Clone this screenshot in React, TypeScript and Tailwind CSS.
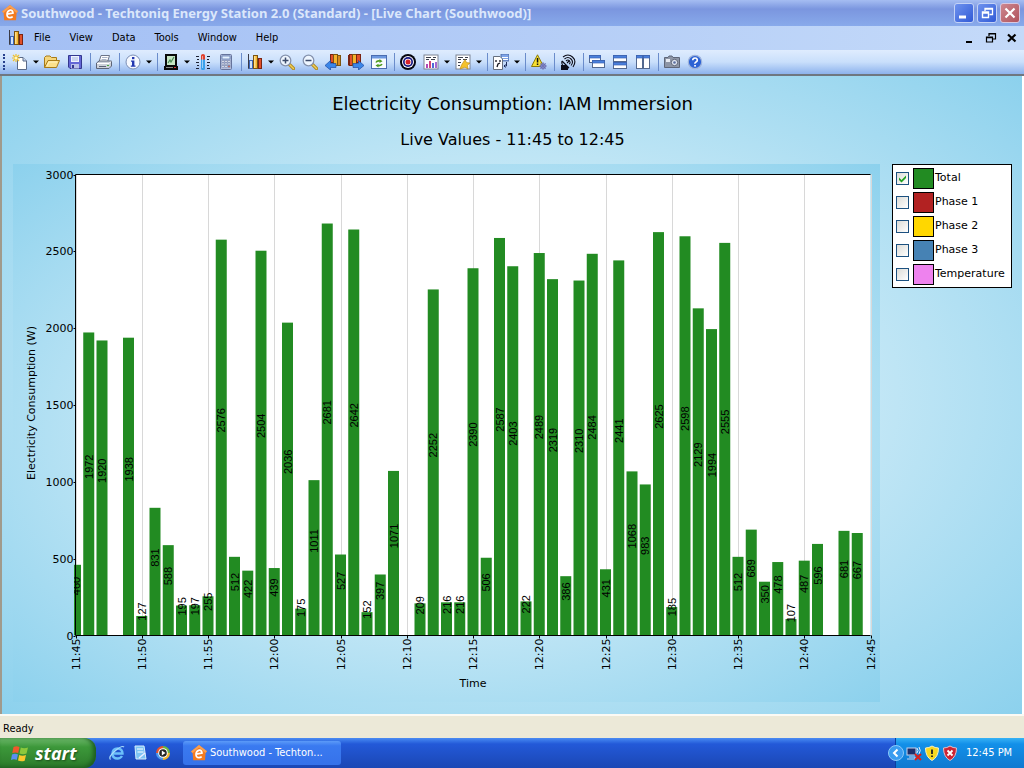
import React, { useState } from 'react';

type IconProps = { className?: string };

const Svg = ({ className = 'h-4 w-4', children }: IconProps & { children: React.ReactNode }) => (
  <svg viewBox="0 0 16 16" className={`shrink-0 ${className}`} aria-hidden="true">
    {children}
  </svg>
);

const HomeLogo = ({ className }: IconProps) => (
  <Svg className={className}>
    <path d="M8 0 16 6.2 14.6 8 14 15.2H2.2L1.6 8 0 6.4Z" fill="#f47b20" />
    <path d="M8 0 16 6.2 14.6 8 8 2.6 1.6 8 0 6.4Z" fill="#f9a052" />
    <path d="M5 9.2 11 8q-.2-3-2.7-2.8Q5.400 5.600 5 9q-.1 3.600 3 3.600 1.500 0 2.700-1" fill="none" stroke="#fff" strokeWidth="1.700" />
  </Svg>
);

const BarsIcon = ({ className }: IconProps) => (
  <Svg className={className}>
    <path d="M1.500 0V14.500H15" fill="none" stroke="#3b3b46" />
    <rect x="2.500" y="6.500" width="3" height="8" fill="#cfe2fb" stroke="#3d66b8" />
    <rect x="6.500" y="1.500" width="4" height="13" fill="#f6b32c" stroke="#7c5410" />
    <rect x="7" y="2" width="1.500" height="12" fill="#fde08a" />
    <rect x="11.500" y="4.500" width="3" height="10" fill="#e2502a" stroke="#7a2412" />
  </Svg>
);

const NewIcon = () => (
  <Svg>
    <path d="M5.500 3.500H11L14.500 7V15.500H5.500Z" fill="#fff" stroke="#5a6a88" />
    <path d="M11 3.500V7H14.500" fill="#c6d6f0" stroke="#5a6a88" />
    <path d="M4 0V8M0 4H8M1 1 7 7M7 1 1 7" stroke="#f0c030" strokeWidth="1.200" />
    <circle cx="4" cy="4" r="1.500" fill="#fff8c0" />
  </Svg>
);

const OpenIcon = () => (
  <Svg>
    <path d="M.5 13.500V3.500L2 2H6L7.500 3.500H12.500V6.500" fill="#f5d67c" stroke="#a87b18" />
    <path d="M.5 13.500 4 6.500H15.500L12.500 13.500Z" fill="#fbe08c" stroke="#a87b18" />
    <path d="M3 12 5 8H13" fill="none" stroke="#fff3c4" />
  </Svg>
);

const SaveIcon = () => (
  <Svg>
    <path d="M1.500 1.500H14.500V14.500H3L1.500 13Z" fill="#6467d6" stroke="#34388f" />
    <rect x="4" y="2" width="8" height="6" fill="#eef3ff" />
    <path d="M5 4H11M5 6H11" stroke="#a5b4dd" />
    <rect x="4" y="10" width="8" height="4.500" fill="#b9c0e8" />
    <rect x="5" y="11" width="2" height="3" fill="#34388f" />
  </Svg>
);

const PrintIcon = () => (
  <Svg>
    <path d="M5 1.500H13.500L11.500 8H3Z" fill="#fff" stroke="#6b7488" />
    <path d="M6 3.500H11.500M5.500 5.500H10.500" stroke="#a9b4c8" />
    <path d="M.500 9 3 7H15.500V12L13 14.500H.500Z" fill="#cdd1da" stroke="#5c6478" />
    <path d="M1 9.500H13L15 7.500" fill="none" stroke="#fff" />
    <path d="M3 12.500H10" stroke="#5c6478" />
    <rect x="11" y="11" width="2" height="1" fill="#4aa83c" />
  </Svg>
);

const InfoIcon = () => (
  <Svg>
    <circle cx="8" cy="8" r="7" fill="#f4f8ff" stroke="#7c8fb5" />
    <rect x="7" y="3" width="2.400" height="2.200" fill="#2438b0" />
    <path d="M6 6.500H9.400V11.500H10.500V12.700H5.800V11.500H7V7.700H6Z" fill="#2438b0" />
  </Svg>
);

const DeviceIcon = () => (
  <Svg>
    <path d="M2 0H14V12H15V16H1V12H2Z" fill="#0a0a0a" />
    <rect x="4" y="2" width="8" height="9" fill="#c6e6c4" />
    <path d="M5 9 7 6 8 8 11 3" fill="none" stroke="#4b8a56" strokeWidth="1.200" />
    <path d="M3 13.500H10" stroke="#8a8a8a" />
    <rect x="11" y="13" width="2" height="1" fill="#d33" />
  </Svg>
);

const ThermoIcon = () => (
  <Svg>
    <path d="M1 2.500H4M2 5.500H4M1 8.500H4M2 11.500H4M1 14.500H4M12 2.500H15M12 5.500H14M12 8.500H15M12 11.500H14M12 14.500H15" stroke="#1d2233" />
    <rect x="6" y="0" width="4" height="7" rx="2" fill="#e0402c" />
    <rect x="6" y="3" width="4" height="13" rx="1.500" fill="#3aa0ec" />
    <rect x="6" y="1.500" width="4" height="4" fill="#e0402c" />
    <path d="M7.500 2V14" stroke="#fff" strokeOpacity=".5" />
  </Svg>
);

const CalcIcon = () => (
  <Svg>
    <rect x="2.500" y=".500" width="11" height="15" rx="1" fill="#b4bfdc" stroke="#66749c" />
    <rect x="4" y="2" width="8" height="3" fill="#e5f2ff" stroke="#5570a8" strokeWidth=".7" />
    {[6.500, 9, 11.500].map((y) => (
      <g key={y} fill="#fff" stroke="#6a78a0" strokeWidth=".5">
        <rect x="4" y={y} width="2" height="1.700" />
        <rect x="7" y={y} width="2" height="1.700" />
        <rect x="10" y={y} width="2" height="1.700" fill={y > 11 ? '#e06a4a' : '#fff'} />
      </g>
    ))}
  </Svg>
);

const ZoomIcon = ({ plus = false }: { plus?: boolean }) => (
  <Svg>
    <path d="M10 10 14.500 14.500" stroke="#b08a1c" strokeWidth="3.200" strokeLinecap="round" />
    <path d="M10.500 10.500 14.500 14.500" stroke="#f0cf5c" strokeWidth="1.400" strokeLinecap="round" />
    <circle cx="6.500" cy="6.500" r="5.300" fill="#eef6ff" stroke="#8592ad" strokeWidth="1.300" />
    <path d={plus ? 'M3.500 6.500H9.500M6.500 3.500V9.500' : 'M3.500 6.500H9.500'} stroke="#3b4a6a" strokeWidth="1.500" />
  </Svg>
);

const ChartBackIcon = () => (
  <Svg>
    <rect x="5.500" y=".500" width="3" height="8" fill="#e2502a" stroke="#7a2412" />
    <rect x="8.500" y=".500" width="4" height="11" fill="#f6b32c" stroke="#7c5410" />
    <rect x="12.500" y="1.500" width="3" height="10" fill="#d88a20" stroke="#7c5410" />
    <path d="M0 11.500 5.500 6.500V9.500H11V13.500H5.500V16Z" fill="#3b86e8" stroke="#1c4ba4" strokeWidth=".7" />
  </Svg>
);

const ChartForwardIcon = () => (
  <Svg>
    <path d="M.500 1V11.500" stroke="#7a2412" />
    <rect x="1.500" y=".500" width="3" height="11" fill="#e2502a" stroke="#7a2412" />
    <rect x="4.500" y=".500" width="4" height="11" fill="#f6b32c" stroke="#7c5410" />
    <rect x="8.500" y=".500" width="4" height="8" fill="#e2502a" stroke="#7a2412" />
    <path d="M16 11.500 10.500 6.500V9.500H5V13.500H10.500V16Z" fill="#3b86e8" stroke="#1c4ba4" strokeWidth=".7" />
  </Svg>
);

const RefreshIcon = () => (
  <Svg>
    <rect x=".500" y="1.500" width="15" height="13" fill="#f7fbff" stroke="#4a6cb0" />
    <rect x="1" y="2" width="14" height="2.500" fill="#6c98e0" />
    <path d="M5 8.500Q6 6.500 9 7M11 10Q10 12 7 11.500" fill="none" stroke="#4f9a20" strokeWidth="1.600" />
    <path d="M8.500 5 11.500 7.300 8.500 9ZM7.500 9.700 4.500 11.500 7.500 13.500Z" fill="#4f9a20" />
  </Svg>
);

const TargetIcon = () => (
  <Svg>
    <circle cx="8" cy="8" r="8" fill="#05050f" />
    <circle cx="8" cy="8" r="6" fill="#fff" />
    <circle cx="8" cy="8" r="5" fill="#161680" />
    <circle cx="8" cy="8" r="3.300" fill="#fff" />
    <circle cx="8" cy="8" r="2.500" fill="#d8232a" />
  </Svg>
);

const ReportIcon = () => (
  <Svg>
    <rect x="1" y="1" width="14" height="14" fill="#fff" stroke="#7c8494" />
    <path d="M3 3.500H8M10 3.500H13M3 5.500H6M8 5.500H12" stroke="#3a3f4c" />
    <rect x="3" y="10" width="2" height="4" fill="#b04ab8" />
    <rect x="6" y="7" width="2" height="7" fill="#d0447c" />
    <rect x="9" y="9" width="2" height="5" fill="#4c6cd8" />
    <rect x="12" y="8" width="2" height="6" fill="#a86ad0" />
  </Svg>
);

const ReportStarIcon = () => (
  <Svg>
    <rect x="1" y="1" width="14" height="14" fill="#fff" stroke="#7c8494" />
    <path d="M3 3.500H8M10 3.500H13M3 5.500H6M8 5.500H12M3 8.500H6M3 11.500H5" stroke="#3a3f4c" />
    <path d="M10 5.500 11.500 8.500 15 9 12.500 11.300 13 15 10 13.200 5 15 6.500 11Z" fill="#f4c22c" stroke="#b98714" strokeWidth=".6" />
  </Svg>
);

const ExportIcon = () => (
  <Svg>
    <rect x="8" y="0" width="8" height="7" fill="#7fa4e8" stroke="#44619c" strokeWidth=".8" />
    <path d="M9 3.500H15M9 5.500H15" stroke="#fff" />
    <path d="M.500 2.500H7L9.500 5V15.500H.500Z" fill="#fff" stroke="#66707f" />
    <path d="M3 6V8M7 6V8M4 13 5 10 7 9" stroke="#15151f" strokeWidth="1.300" fill="none" />
    <path d="M13.500 8V12H11M12.500 10.500 11 12 12.500 13.500" stroke="#1d2d5c" fill="none" />
  </Svg>
);

const WarningIcon = () => (
  <Svg>
    <path d="M6.500.800 12.500 12.500H.500Z" fill="#f8e032" stroke="#8a7a08" />
    <rect x="5.800" y="4" width="1.500" height="4.500" fill="#111" />
    <rect x="5.800" y="9.500" width="1.500" height="1.500" fill="#111" />
    <circle cx="12" cy="12" r="2.200" fill="#c9cdf0" stroke="#6a6fb4" strokeWidth="1.300" />
    <path d="M12 8V16M8 12H16M9.200 9.200 14.800 14.800M14.800 9.200 9.200 14.800" stroke="#6a6fb4" strokeWidth=".8" />
  </Svg>
);

const DishIcon = () => (
  <Svg>
    <g fill="none" stroke="#0c0c18" strokeWidth="1.100">
      <path d="M3 3Q8-1 12.500 3T13 13" />
      <path d="M4.500 5Q8 2 11 5T11 11.500" />
      <path d="M6 7Q8 5 9.500 7T9 10" />
      <path d="M2 7 9 14M2 7Q1 11 5 13L9 14M7 9 9.500 6.500" />
    </g>
    <path d="M1 11H6L8 13V16H1Z" fill="#0c0c18" />
  </Svg>
);

const Pane = ({ x, y, w, h }: { x: number; y: number; w: number; h: number }) => (
  <g>
    <rect x={x + 0.5} y={y + 0.5} width={w - 1} height={h - 1} fill="#fff" stroke="#54698f" />
    <rect x={x + 0.5} y={y + 0.5} width={w - 1} height="2.500" fill="#4a80dc" stroke="#3a62b4" strokeWidth=".7" />
  </g>
);

const CascadeIcon = () => <Svg><Pane x={0} y={1} w={12} h={8} /><Pane x={3} y={6} w={13} h={8} /></Svg>;
const TileRowsIcon = () => <Svg><Pane x={1} y={1} w={14} h={7} /><Pane x={1} y={8} w={14} h={7} /></Svg>;
const TileColumnsIcon = () => <Svg><Pane x={1} y={1} w={7} h={14} /><Pane x={8} y={1} w={7} h={14} /></Svg>;

const CameraIcon = () => (
  <Svg>
    <path d="M.500 3.500H4L5 2H8L9 3.500H15.500V13.500H.500Z" fill="#8d95a6" stroke="#5e6678" />
    <rect x="2" y="5" width="4" height="3" fill="#e6eaf2" />
    <circle cx="10.500" cy="8.500" r="3.200" fill="#dfe5f0" stroke="#5e6678" />
    <circle cx="10.500" cy="8.500" r="1.300" fill="#5a6ea0" />
  </Svg>
);

const HelpIcon = () => (
  <Svg>
    <circle cx="8" cy="8" r="6.700" fill="#2c62d4" stroke="#9fb4dc" strokeWidth="1.200" />
    <path d="M5.700 6.300Q5.800 4 8 4T10.300 6.200Q10.300 7.300 9 8T8 9.800" fill="none" stroke="#fff" strokeWidth="1.600" />
    <rect x="7.200" y="11" width="1.700" height="1.600" fill="#fff" />
  </Svg>
);

type Tool = { label: string; icon: React.ReactNode; menu?: boolean };

const toolGroups: Tool[][] = [
  [
    { label: 'New', icon: <NewIcon />, menu: true },
    { label: 'Open', icon: <OpenIcon /> },
    { label: 'Save', icon: <SaveIcon /> },
  ],
  [{ label: 'Print', icon: <PrintIcon /> }],
  [{ label: 'Information', icon: <InfoIcon />, menu: true }],
  [
    { label: 'Device', icon: <DeviceIcon />, menu: true },
    { label: 'Temperature', icon: <ThermoIcon /> },
    { label: 'Calculator', icon: <CalcIcon /> },
  ],
  [
    { label: 'Chart', icon: <BarsIcon />, menu: true },
    { label: 'Zoom in', icon: <ZoomIcon plus /> },
    { label: 'Zoom out', icon: <ZoomIcon /> },
    { label: 'Previous period', icon: <ChartBackIcon /> },
    { label: 'Next period', icon: <ChartForwardIcon /> },
    { label: 'Refresh', icon: <RefreshIcon /> },
  ],
  [
    { label: 'Targets', icon: <TargetIcon /> },
    { label: 'Report', icon: <ReportIcon />, menu: true },
    { label: 'Favourite reports', icon: <ReportStarIcon />, menu: true },
  ],
  [{ label: 'Export', icon: <ExportIcon />, menu: true }],
  [{ label: 'Alerts', icon: <WarningIcon /> }],
  [{ label: 'Receiver', icon: <DishIcon /> }],
  [
    { label: 'Cascade', icon: <CascadeIcon /> },
    { label: 'Tile rows', icon: <TileRowsIcon /> },
    { label: 'Tile columns', icon: <TileColumnsIcon /> },
  ],
  [
    { label: 'Snapshot', icon: <CameraIcon /> },
    { label: 'Help', icon: <HelpIcon /> },
  ],
];

// [minute after 11:45, watts]
const readings: [number, number][] = [
  [0, 460], [1, 1972], [2, 1920], [4, 1938], [5, 127], [6, 831], [7, 588], [8, 195], [9, 197], [10, 255],
  [11, 2576], [12, 512], [13, 422], [14, 2504], [15, 439], [16, 2036], [17, 175], [18, 1011], [19, 2681],
  [20, 527], [21, 2642], [22, 152], [23, 397], [24, 1071], [26, 209], [27, 2252], [28, 216], [29, 216],
  [30, 2390], [31, 506], [32, 2587], [33, 2403], [34, 222], [35, 2489], [36, 2319], [37, 386], [38, 2310],
  [39, 2484], [40, 431], [41, 2441], [42, 1068], [43, 983], [44, 2625], [45, 185], [46, 2598], [47, 2129],
  [48, 1994], [49, 2555], [50, 512], [51, 689], [52, 350], [53, 478], [54, 107], [55, 487], [56, 596],
  [58, 681], [59, 667],
];

const times = ['11:45', '11:50', '11:55', '12:00', '12:05', '12:10', '12:15', '12:20', '12:25', '12:30', '12:35', '12:40', '12:45'];
const watts = [0, 500, 1000, 1500, 2000, 2500, 3000];

const LEFT = 62.5;
const TOP = 10.5;
const WIDTH = 795;
const HEIGHT = 461;
const BOTTOM = TOP + HEIGHT;

const xOf = (minute: number) => LEFT + (minute / 60) * WIDTH;
const yOf = (value: number) => BOTTOM - (value / 3000) * HEIGHT;

function LiveChart({ showTotal }: { showTotal: boolean }) {
  return (
    <svg
      viewBox="0 0 867 538"
      role="img"
      aria-label="Electricity consumption by minute"
      className="min-w-0 flex-1 bg-[radial-gradient(ellipse_farthest-corner_at_center,#f8fcfe,#8cd1ed)] font-['DejaVu_Sans',Verdana,sans-serif] text-[11px]"
    >
      <clipPath id="plot">
        <rect x={LEFT - 1.5} y={TOP} width={WIDTH + 1.5} height={HEIGHT} />
      </clipPath>
      <rect x={LEFT} y={TOP} width={WIDTH} height={HEIGHT} fill="#fff" />
      {times.map((time, i) => (
        <g key={time}>
          <path d={`M${Math.round(xOf(i * 5)) + 0.5} ${TOP}V${BOTTOM}`} stroke="#d8d8d8" />
          <path d={`M${Math.round(xOf(i * 5)) + 0.5} ${BOTTOM}v3`} stroke="#000" />
          <text transform={`translate(${xOf(i * 5) + 4} ${BOTTOM + 3}) rotate(-90)`} textAnchor="end">
            {time}
          </text>
        </g>
      ))}
      <g clipPath="url(#plot)">
        {showTotal &&
          readings.map(([minute, value]) => (
            <rect
              key={minute}
              x={xOf(minute) - 5.5}
              y={yOf(value)}
              width="11"
              height={BOTTOM - yOf(value)}
              fill="#228b22"
            />
          ))}
      </g>
      <path d={`M${LEFT} ${BOTTOM}V${TOP}H${LEFT + WIDTH}M${LEFT} ${BOTTOM}H${LEFT + WIDTH}`} fill="none" stroke="#000" />
      {watts.map((value) => (
        <g key={value}>
          <path d={`M${LEFT - 2} ${Math.round(yOf(value)) + 0.5}h2`} stroke="#000" />
          <text x={LEFT - 2} y={yOf(value) + 4} textAnchor="end">
            {value}
          </text>
        </g>
      ))}
      {showTotal && (
        <g clipPath="url(#plot)" className="font-['Liberation_Sans',Arial,sans-serif]">
          {readings.map(([minute, value]) => (
            <text key={minute} transform={`translate(${xOf(minute) + 4} ${(yOf(value) + BOTTOM) / 2 - 5}) rotate(-90)`}>
              {value}
            </text>
          ))}
        </g>
      )}
      <text transform={`translate(22 ${TOP + HEIGHT / 2 - 2}) rotate(-90)`} textAnchor="middle">
        Electricity Consumption (W)
      </text>
      <text x={LEFT + WIDTH / 2} y="523" textAnchor="middle">
        Time
      </text>
    </svg>
  );
}

const series = [
  { name: 'Total', swatch: 'bg-[#228b22]' },
  { name: 'Phase 1', swatch: 'bg-[#b22222]' },
  { name: 'Phase 2', swatch: 'bg-[#ffd700]' },
  { name: 'Phase 3', swatch: 'bg-[#4682b4]' },
  { name: 'Temperature', swatch: 'bg-[#ee82ee]' },
];

function Legend({ shown, onToggle }: { shown: string[]; onToggle: (name: string) => void }) {
  return (
    <div className="w-[120px] shrink-0 border border-black bg-white py-px pl-[3px]">
      {series.map(({ name, swatch }) => (
        <label key={name} className="flex h-6 items-center font-['DejaVu_Sans',Verdana,sans-serif] text-[11px]">
          <span className="mr-1 grid h-[13px] w-[13px]">
            <input
              type="checkbox"
              checked={shown.includes(name)}
              onChange={() => onToggle(name)}
              className="col-start-1 row-start-1 h-[13px] w-[13px] appearance-none border border-[#1c5180] bg-linear-to-br from-[#dcdcd7] to-white"
            />
            {shown.includes(name) && (
              <svg viewBox="0 0 13 13" className="pointer-events-none col-start-1 row-start-1 h-[13px] w-[13px]">
                <path d="M3 5.500 5.500 8 10 3.500V6L5.500 10.500 3 8Z" fill="#21a121" />
              </svg>
            )}
          </span>
          <span className={`mr-px h-[21px] w-[21px] border border-black ${swatch}`} />
          {name}
        </label>
      ))}
    </div>
  );
}

function TitleBar() {
  return (
    <header className="flex h-[26px] items-center gap-[3px] bg-linear-to-b from-[#a5bdf2] via-[#7b96df] via-35% to-[#88aaeb] pr-1 pl-[2px]">
      <HomeLogo />
      <h1 className="flex-1 truncate font-['Noto_Sans','Open_Sans',sans-serif] text-[13px] leading-5 font-bold text-[#dbe7fb]">
        Southwood - Techtoniq Energy Station 2.0 (Standard) - [Live Chart (Southwood)]
      </h1>
      <button aria-label="Minimize" className="h-5 w-5 rounded-[3px] border border-[#c3d2f6] bg-linear-to-br from-[#6f92ee] to-[#3159d6]">
        <svg viewBox="0 0 18 18"><path d="M4 13H11" stroke="#fff" strokeWidth="3" /></svg>
      </button>
      <button aria-label="Restore" className="h-5 w-5 rounded-[3px] border border-[#c3d2f6] bg-linear-to-br from-[#6f92ee] to-[#3159d6]">
        <svg viewBox="0 0 18 18">
          <path d="M7 7V4.500H14.500V10.500H11.500M7 5H14.500" fill="none" stroke="#fff" strokeWidth="1.300" />
          <path d="M4.500 8H10.500V13.500H4.500ZM4.500 9H10.500" fill="none" stroke="#fff" strokeWidth="1.400" />
        </svg>
      </button>
      <button aria-label="Close" className="h-5 w-5 rounded-[3px] border border-[#d8c8e0] bg-linear-to-br from-[#cd8790] to-[#b0525c]">
        <svg viewBox="0 0 18 18"><path d="M4.500 4.500 13.500 13.500M13.500 4.500 4.500 13.500" stroke="#fff" strokeWidth="2.200" /></svg>
      </button>
    </header>
  );
}

function MenuBar() {
  return (
    <nav className="flex h-6 items-center bg-linear-to-r from-[#a3bff4] to-[#c4daf9] pr-1 pl-2">
      <BarsIcon />
      <div className="ml-[10px] flex flex-1 gap-[19px]">
        {['File', 'View', 'Data', 'Tools', 'Window', 'Help'].map((item) => (
          <button key={item}>{item}</button>
        ))}
      </div>
      <div className="flex gap-[5px]">
        <button aria-label="Minimize chart"><Svg><path d="M4 12H10" stroke="#000" strokeWidth="2" /></Svg></button>
        <button aria-label="Restore chart">
          <Svg>
            <path d="M6 6V3.500H12.500V9H10M6 4H12.500" fill="none" stroke="#000" strokeWidth="1.200" />
            <path d="M3.500 7H9.500V12H3.500ZM3.500 7.700H9.500" fill="none" stroke="#000" strokeWidth="1.200" />
          </Svg>
        </button>
        <button aria-label="Close chart"><Svg><path d="M4 4.500 11.500 11.500M11.500 4.500 4 11.500" stroke="#000" strokeWidth="2.200" /></Svg></button>
      </div>
    </nav>
  );
}

function ToolBar() {
  return (
    <div className="flex h-[26px] items-center border-b-2 border-[#6f7780] bg-linear-to-b from-[#dfecfe] via-[#c9dffb] to-[#8db2ec]">
      <span className="mx-[3px] h-4 w-[2px] border-l-2 border-dotted border-[#27418e]" />
      {toolGroups.map((group, i) => (
        <div key={group[0].label} className="flex items-center">
          {i > 0 && <span className="mr-px ml-1 h-[18px] w-px bg-[#6a8ccb]" />}
          {group.map(({ label, icon, menu }) => (
            <button key={label} aria-label={label} title={label} className="flex items-center pl-1">
              {icon}
              {menu ? (
                <svg viewBox="0 0 12 16" className="h-4 w-3"><path d="M5 6.500H11L8 9.500Z" fill="#000" /></svg>
              ) : (
                <span className="w-[3px]" />
              )}
            </button>
          ))}
        </div>
      ))}
    </div>
  );
}

function TaskBar() {
  return (
    <footer className="flex h-[30px] items-center bg-linear-to-b from-[#4a8bf2] via-[#2359d8] via-20% to-[#1b47b4] text-white">
      <button className="flex h-full w-24 items-center gap-[6px] rounded-r-xl bg-linear-to-b from-[#6cb86a] via-[#3c983a] via-30% to-[#2d7b2b] pl-[11px] shadow-[inset_-3px_-1px_4px_#1d5c20]">
        <svg viewBox="0 0 18 17" className="h-[17px] w-[18px]" aria-hidden="true">
          <path d="M2.500 2Q5.500.500 8.500 2L7.200 8Q4.500 6.800 1.300 8Z" fill="#f1582c" />
          <path d="M9.800 2.500Q13 4 17 2.500L15.500 8.500Q12 10 8.500 8.500Z" fill="#8cc83c" />
          <path d="M1 9.500Q4 8.200 7 9.500L5.700 15Q3 13.700 0 15Z" fill="#5b8ff0" />
          <path d="M8.200 10Q11.500 11.500 15 10L13.700 15.800Q10 17 7 15.500Z" fill="#fbc72c" />
        </svg>
        <span className="font-['Open_Sans',sans-serif] text-lg leading-6 font-bold italic [text-shadow:1px_1px_2px_#1b4d1b]">start</span>
      </button>
      <div className="ml-[13px] flex items-center gap-[7px]">
        <button aria-label="Internet Explorer">
          <Svg>
            <path d="M3.500 8.500H13.500Q13.500 3.500 8.500 3.500T3.500 8.800Q3.800 13.500 8.500 13.500 11.500 13.500 13 11" fill="none" stroke="#6cc0fa" strokeWidth="2.400" />
            <path d="M1.500 14.500Q-1 12 6 6T15 2" fill="none" stroke="#a9dcfc" strokeWidth="1.200" />
          </Svg>
        </button>
        <button aria-label="Show desktop">
          <Svg>
            <path d="M3 1H12L14 14H4Z" fill="#7cc4f4" stroke="#d8effc" />
            <path d="M5 4H11M5.500 7H11.500" stroke="#fff" />
            <path d="M7 13 13 8" stroke="#eef" strokeWidth="1.500" />
          </Svg>
        </button>
        <button aria-label="Media Player">
          <Svg>
            <path d="M8 8V1A7 7 0 0 0 1 8Z" fill="#e8532c" />
            <path d="M8 8H1A7 7 0 0 0 8 15Z" fill="#4c9af0" />
            <path d="M8 8V15A7 7 0 0 0 15 8Z" fill="#f4b62c" />
            <path d="M8 8H15A7 7 0 0 0 8 1Z" fill="#6cb83c" />
            <circle cx="8" cy="8" r="4.800" fill="#fff" />
            <circle cx="8" cy="8" r="3.800" fill="#222" />
            <path d="M6.800 5.500 10.500 8 6.800 10.500Z" fill="#fff" />
          </Svg>
        </button>
      </div>
      <button className="ml-3 flex h-6 w-[158px] items-center gap-[3px] rounded-[3px] bg-linear-to-b from-[#5c9af8] via-[#3a7af0] via-20% to-[#3672ea] pl-2">
        <HomeLogo />
        <span className="truncate">Southwood - Techton...</span>
      </button>
      <div className="ml-auto flex h-full w-[129px] items-center border-l border-[#0b3fa0] bg-linear-to-b from-[#35b2f5] via-[#1290e9] via-20% to-[#1079d0]">
        <button aria-label="Show hidden icons" className="-ml-2">
          <Svg>
            <circle cx="8" cy="8" r="7.500" fill="#3a9cf0" stroke="#8ccbfa" />
            <path d="M9.500 4.500 6 8 9.500 11.500" fill="none" stroke="#fff" strokeWidth="2" />
          </Svg>
        </button>
        <div className="ml-[2px] flex gap-[2px]">
          <Svg>
            <rect x="1" y="3" width="9" height="7" fill="#1c2f6c" stroke="#c8d4ec" />
            <path d="M3 12H9V14H1" fill="none" stroke="#c8d4ec" />
            <path d="M11 3Q13 5.500 11 8M13 2Q15.500 5.500 13 9" fill="none" stroke="#e4eefc" />
            <path d="M9 9 15 15M15 9 9 15" stroke="#d8201c" strokeWidth="2" />
          </Svg>
          <Svg>
            <path d="M8 1Q11 3 14.500 3 14.500 12 8 15.500 1.500 12 1.500 3 5 3 8 1Z" fill="#f8d820" stroke="#f8f0c0" />
            <path d="M8 4.500V9M8 10.500V12" stroke="#222" strokeWidth="1.800" />
          </Svg>
          <Svg>
            <path d="M8 1Q11 3 14.500 3 14.500 12 8 15.500 1.500 12 1.500 3 5 3 8 1Z" fill="#cc2434" stroke="#e8c0c8" />
            <path d="M5.500 5.500 10.500 10.500M10.500 5.500 5.500 10.500" stroke="#fff" strokeWidth="1.800" />
          </Svg>
        </div>
        <time className="ml-2">12:45 PM</time>
      </div>
    </footer>
  );
}

export default function App() {
  const [shown, setShown] = useState(['Total']);

  const toggle = (name: string) =>
    setShown((prev) => (prev.includes(name) ? prev.filter((n) => n !== name) : [...prev, name]));

  return (
    <div className="flex min-h-screen flex-col font-['DejaVu_Sans_Condensed',Tahoma,'Liberation_Sans',sans-serif] text-[11px] leading-4 text-black">
      <TitleBar />
      <MenuBar />
      <ToolBar />

      <main className="flex flex-1 flex-col gap-3 border-r-2 border-l-2 border-r-white border-l-[#a09a8c] bg-[radial-gradient(ellipse_farthest-corner_at_center,#f8fcfe,#8cd1ed)] pt-4 pr-[10px] pb-3 pl-[11px]">
        <h2 className="text-center font-['DejaVu_Sans',Verdana,sans-serif] text-lg leading-6">
          Electricity Consumption: IAM Immersion
        </h2>
        <p className="text-center font-['DejaVu_Sans',Verdana,sans-serif] text-base leading-6">Live Values - 11:45 to 12:45</p>
        <div className="flex items-start gap-3">
          <LiveChart showTotal={shown.includes('Total')} />
          <Legend shown={shown} onToggle={toggle} />
        </div>
      </main>

      <div className="flex h-6 items-center border-t-2 border-[#fbfaf4] bg-[#ece9d8] px-[3px] pt-1">Ready</div>
      <TaskBar />
    </div>
  );
}
